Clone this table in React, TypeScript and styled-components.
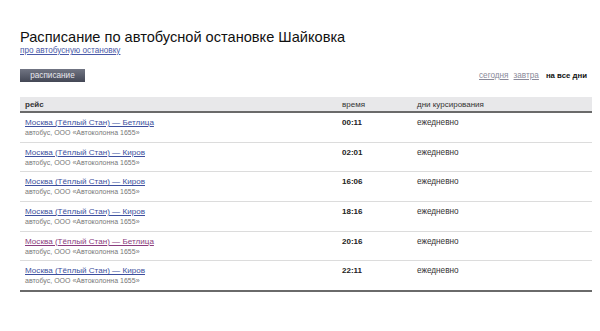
import styled, { createGlobalStyle } from 'styled-components';

const GlobalStyle = createGlobalStyle`
  body {
    margin: 0;
    background: #fff;
    font-family: "Liberation Sans", Arial, sans-serif;
  }
`;

type TTrip = {
  route: string;
  time: string;
  visited?: boolean;
};

const trips: TTrip[] = [
  { route: 'Москва (Тёплый Стан) — Бетлица', time: '00:11' },
  { route: 'Москва (Тёплый Стан) — Киров', time: '02:01' },
  { route: 'Москва (Тёплый Стан) — Киров', time: '16:06' },
  { route: 'Москва (Тёплый Стан) — Киров', time: '18:16' },
  { route: 'Москва (Тёплый Стан) — Бетлица', time: '20:16', visited: true },
  { route: 'Москва (Тёплый Стан) — Киров', time: '22:11' },
];

const App = () => {
  return (
    <Page>
      <GlobalStyle />
      <Title>Расписание по автобусной остановке Шайковка</Title>
      <StopLink href="#">про автобусную остановку</StopLink>
      <Toolbar>
        <TabButton>расписание</TabButton>
        <DayNav>
          <DayLink href="#">сегодня</DayLink>
          <DayLink href="#">завтра</DayLink>
          <DayCurrent>на все дни</DayCurrent>
        </DayNav>
      </Toolbar>
      <Table>
        <HeadRow>
          <HeadCell $bold>рейс</HeadCell>
          <HeadCell>время</HeadCell>
          <HeadCell>дни курсирования</HeadCell>
        </HeadRow>
        {trips.map((trip, i) => (
          <Row key={i} $last={i === trips.length - 1}>
            <RouteCell>
              <RouteLink href="#" $visited={trip.visited}>
                {trip.route}
              </RouteLink>
              <Carrier>автобус, ООО «Автоколонна 1655»</Carrier>
            </RouteCell>
            <Time>{trip.time}</Time>
            <Days>ежедневно</Days>
          </Row>
        ))}
      </Table>
    </Page>
  );
};

export default App;

const Page = styled.div`
  width: 572px;
  padding: 29px 0 0 20px;
`;

const Title = styled.h1`
  margin: 0;
  font-size: 14.6px;
  font-weight: normal;
  line-height: 17px;
  color: #111;
`;

const StopLink = styled.a`
  display: block;
  width: fit-content;
  font-size: 8.2px;
  line-height: 10px;
  color: #4a5aa8;
  text-decoration: underline;
`;

const Toolbar = styled.div`
  display: flex;
  justify-content: space-between;
  align-items: center;
  margin-top: 13px;
  padding-right: 5px;
`;

const TabButton = styled.div`
  width: 65px;
  height: 13px;
  display: flex;
  align-items: center;
  justify-content: center;
  background: linear-gradient(#717583, #434755);
  color: #e8e8ee;
  font-size: 8.2px;
`;

const DayNav = styled.div`
  display: flex;
  gap: 5px;
  align-items: baseline;
  font-size: 8.2px;
`;

const DayLink = styled.a`
  color: #8a8a9a;
  text-decoration: underline;
`;

const DayCurrent = styled.span`
  font-size: 7.8px;
  font-weight: bold;
  color: #111;
  margin-left: 2px;
`;

const Table = styled.div`
  margin-top: 15px;
  display: flex;
  flex-direction: column;
`;

const columns = `grid-template-columns: 317px 75px 1fr;`;

const HeadRow = styled.div`
  display: grid;
  ${columns}
  height: 14px;
  align-items: center;
  background: #e8e8ea;
  border-bottom: 2px solid #6a6a6a;
`;

const HeadCell = styled.div<{ $bold?: boolean }>`
  padding-left: 5px;
  font-size: 8px;
  font-weight: ${(p) => (p.$bold ? 'bold' : 'normal')};
  color: #333;
`;

const Row = styled.div<{ $last?: boolean }>`
  display: grid;
  ${columns}
  height: 28.7px;
  border-bottom: ${(p) => (p.$last ? '2px solid #6a6a6a' : '1px solid #dcdcdc')};
`;

const RouteCell = styled.div`
  padding: 4px 0 0 5px;
  display: flex;
  flex-direction: column;
  align-items: flex-start;
`;

const RouteLink = styled.a<{ $visited?: boolean }>`
  font-size: 8.1px;
  line-height: 11px;
  color: ${(p) => (p.$visited ? '#8a3c7e' : '#3d4f9e')};
  text-decoration: underline;
`;

const Carrier = styled.span`
  font-size: 7px;
  line-height: 10px;
  color: #777;
`;

const Time = styled.div`
  padding: 4px 0 0 5px;
  font-size: 8px;
  line-height: 11px;
  font-weight: bold;
  color: #222;
`;

const Days = styled.div`
  padding: 4px 0 0 5px;
  font-size: 8.2px;
  line-height: 11px;
  color: #333;
`;
